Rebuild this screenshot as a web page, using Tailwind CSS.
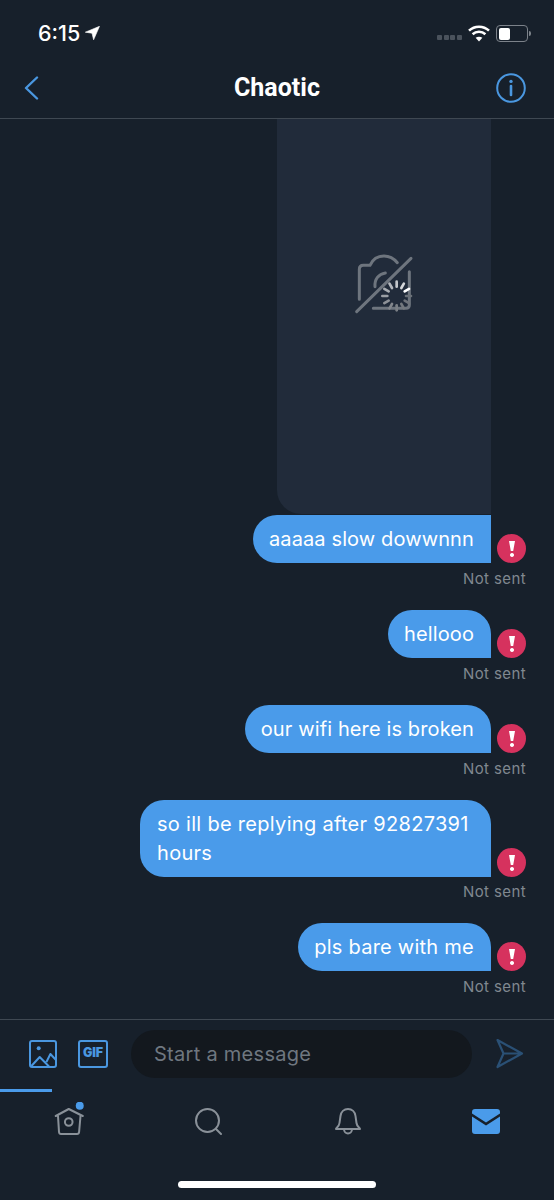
<!DOCTYPE html>
<html lang="en">
<head>
    <meta charset="UTF-8">
    <meta name="viewport" content="width=device-width, initial-scale=1.0">
    <title>Chaotic</title>
    <script src="https://cdn.jsdelivr.net/npm/@tailwindcss/browser@4"></script>
</head>
<body class="bg-[#17202b] font-['Inter',sans-serif] text-white">
    <div class="w-[554px] h-[1200px] overflow-hidden flex flex-col relative">

        <!-- Status bar -->
        <div class="h-[66px] flex items-start justify-between pt-[20px] pl-[38px] pr-[23px]">
            <div class="flex items-center gap-[5px]">
                <span class="text-[21.5px] leading-[26px] font-medium">6:15</span>
                <svg class="w-[15px] h-[14px]" viewBox="0 0 15 14"><path d="M14.5 .3 L.3 6.2 L7 7.2 L8.6 13.8 Z" fill="#fff" stroke="#fff" stroke-width=".6" stroke-linejoin="round"/></svg>
            </div>
            <div class="flex items-start">
                <div class="flex gap-[1.6px] mt-[15px] mr-[6px]">
                    <span class="w-[5px] h-[5px] rounded-[1px] bg-[#4a525c]"></span>
                    <span class="w-[5px] h-[5px] rounded-[1px] bg-[#4a525c]"></span>
                    <span class="w-[5px] h-[5px] rounded-[1px] bg-[#4a525c]"></span>
                    <span class="w-[5px] h-[5px] rounded-[1px] bg-[#4a525c]"></span>
                </div>
                <svg class="w-[22px] h-[17px] mt-[5px] mr-[6px]" viewBox="0 0 22 17" fill="none" stroke="#fff" stroke-width="2.6">
                    <path d="M1 5.6 C6.6 .4 15.4 .4 21 5.6"/>
                    <path d="M4.6 9.2 C8.2 6 13.8 6 17.4 9.2"/>
                    <path d="M11 16.6 L7.6 12.8 C9.6 11.3 12.4 11.3 14.4 12.8 Z" fill="#fff" stroke="none"/>
                </svg>
                <div class="flex items-center gap-[1px] mt-[5px]">
                    <div class="w-[32px] h-[17px] rounded-[4px] border border-[#7c828a] p-[1.5px]">
                        <div class="w-[11px] h-full rounded-[2px] bg-white"></div>
                    </div>
                    <span class="w-[2px] h-[5px] rounded-r bg-[#7c828a]"></span>
                </div>
            </div>
        </div>

        <!-- Nav -->
        <header class="h-[53px] grid grid-cols-[1fr_auto_1fr] items-center pl-[23px] pr-[28px] pb-[8px] border-b border-[#3f4852]">
            <svg class="w-[16px] h-[24px]" viewBox="0 0 16 24" fill="none" stroke="#4a97e0" stroke-width="2.4" stroke-linecap="round" stroke-linejoin="round"><path d="M14 1.5 L3 12 L14 22.5"/></svg>
            <h1 class="text-[25px] leading-[30px] font-bold font-['Roboto',sans-serif] ml-[5px]">Chaotic</h1>
            <svg class="w-[30px] h-[30px] justify-self-end" viewBox="0 0 30 30" fill="none" stroke="#4a97e0" stroke-width="2">
                <circle cx="15" cy="15" r="13.8"/>
                <path d="M15 13 V22" stroke-width="2.6" stroke-linecap="round"/>
                <circle cx="15" cy="8.4" r="1.7" fill="#4a97e0" stroke="none"/>
            </svg>
        </header>

        <!-- Messages -->
        <main class="h-[900px] flex flex-col items-end justify-end overflow-hidden pr-[28px]">
            <div class="w-[214px] h-[458px] shrink-0 mr-[35px] bg-[#212b3a] rounded-bl-[24px] flex items-center justify-center">
                <svg class="w-[100px] h-[90px] mr-[8px]" viewBox="0 0 300 270" fill="none" stroke="#6e757e" stroke-width="9" stroke-linecap="round" stroke-linejoin="round">
                    <path d="M88 178 V88 Q88 76 100 76 H120 C128 58 144 48 162 48 C178 48 192 56 202 68"/>
                    <path d="M135 140 C133 118 146 102 166 99"/>
                    <path d="M80 215 L243 55"/>
                    <path d="M130 205 H228 Q238 205 238 195 V95"/>
                    <g stroke-width="8">
                        <path d="M214 144 L221.500 131" stroke="#d5d7da"/>
                        <path d="M224 154 L237 146.500" stroke="#ffffff"/>
                        <path d="M228 168 L243 168" stroke="#6a7077"/>
                        <path d="M224 182 L237 189.500" stroke="#6e737a"/>
                        <path d="M214 192 L221.500 205" stroke="#73787e"/>
                        <path d="M200 196 L200 211" stroke="#7a7f85"/>
                        <path d="M186 192 L178.500 205" stroke="#82868c"/>
                        <path d="M176 182 L163 189.500" stroke="#8d9197"/>
                        <path d="M172 168 L157 168" stroke="#9a9ea4"/>
                        <path d="M176 154 L163 146.500" stroke="#a8acb1"/>
                        <path d="M186 144 L178.500 131" stroke="#b5b8bd"/>
                        <path d="M200 140 L200 125" stroke="#c4c7cb"/>
                    </g>
                </svg>
            </div>

            <div class="flex flex-col items-end h-[95px] shrink-0 mt-[1px]">
                <div class="flex items-end gap-[6px]">
                    <div class="h-[48px] flex items-center pl-[16px] pr-[17px] bg-[#4a9bea] rounded-l-[24px] text-[20px] leading-[26px] tracking-[0.12px]">aaaaa slow dowwnnn</div>
                    <div class="w-[29px] h-[29px] rounded-full bg-[#d6325e] flex items-center justify-center">
                        <svg class="w-[10px] h-[17px]" viewBox="0 0 10 17"><path d="M2 1 H8 L6.2 11 H3.8 Z M5 13 a2 2 0 1 0 .01 0 Z" fill="#fff"/></svg>
                    </div>
                </div>
                <span class="mt-[6px] text-[15px] leading-[20px] tracking-[0.4px] text-[#808890]">Not sent</span>
            </div>

            <div class="flex flex-col items-end h-[95px] shrink-0">
                <div class="flex items-end gap-[6px]">
                    <div class="h-[48px] flex items-center pl-[16px] pr-[17px] bg-[#4a9bea] rounded-l-[24px] rounded-tr-[24px] text-[20px] leading-[26px] tracking-[0.12px]">hellooo</div>
                    <div class="w-[29px] h-[29px] rounded-full bg-[#d6325e] flex items-center justify-center">
                        <svg class="w-[10px] h-[17px]" viewBox="0 0 10 17"><path d="M2 1 H8 L6.2 11 H3.8 Z M5 13 a2 2 0 1 0 .01 0 Z" fill="#fff"/></svg>
                    </div>
                </div>
                <span class="mt-[6px] text-[15px] leading-[20px] tracking-[0.4px] text-[#808890]">Not sent</span>
            </div>

            <div class="flex flex-col items-end h-[95px] shrink-0">
                <div class="flex items-end gap-[6px]">
                    <div class="h-[48px] flex items-center pl-[16px] pr-[17px] bg-[#4a9bea] rounded-l-[24px] rounded-tr-[24px] text-[20px] leading-[26px] tracking-[0.12px]">our wifi here is broken</div>
                    <div class="w-[29px] h-[29px] rounded-full bg-[#d6325e] flex items-center justify-center">
                        <svg class="w-[10px] h-[17px]" viewBox="0 0 10 17"><path d="M2 1 H8 L6.2 11 H3.8 Z M5 13 a2 2 0 1 0 .01 0 Z" fill="#fff"/></svg>
                    </div>
                </div>
                <span class="mt-[6px] text-[15px] leading-[20px] tracking-[0.4px] text-[#808890]">Not sent</span>
            </div>

            <div class="flex flex-col items-end h-[123px] shrink-0">
                <div class="flex items-end gap-[6px]">
                    <div class="w-[351px] h-[77px] flex items-center pl-[17px] pr-[17px] bg-[#4a9bea] rounded-l-[24px] rounded-tr-[24px] text-[20px] leading-[29px] tracking-[0.3px]">so ill be replying after 92827391 hours</div>
                    <div class="w-[29px] h-[29px] rounded-full bg-[#d6325e] flex items-center justify-center">
                        <svg class="w-[10px] h-[17px]" viewBox="0 0 10 17"><path d="M2 1 H8 L6.2 11 H3.8 Z M5 13 a2 2 0 1 0 .01 0 Z" fill="#fff"/></svg>
                    </div>
                </div>
                <span class="mt-[5px] text-[15px] leading-[20px] tracking-[0.4px] text-[#808890]">Not sent</span>
            </div>

            <div class="flex flex-col items-end h-[96px] shrink-0">
                <div class="flex items-end gap-[6px]">
                    <div class="h-[48px] flex items-center pl-[16px] pr-[17px] bg-[#4a9bea] rounded-l-[24px] rounded-tr-[24px] text-[20px] leading-[26px] tracking-[0.25px]">pls bare with me</div>
                    <div class="w-[29px] h-[29px] rounded-full bg-[#d6325e] flex items-center justify-center">
                        <svg class="w-[10px] h-[17px]" viewBox="0 0 10 17"><path d="M2 1 H8 L6.2 11 H3.8 Z M5 13 a2 2 0 1 0 .01 0 Z" fill="#fff"/></svg>
                    </div>
                </div>
                <span class="mt-[6px] text-[15px] leading-[20px] tracking-[0.4px] text-[#808890]">Not sent</span>
            </div>
        </main>

        <!-- Composer -->
        <div class="h-[70px] shrink-0 border-t border-[#3f4852] flex items-center pl-[29px] pr-[30px] pb-[2px]">
            <svg class="w-[28px] h-[28px] shrink-0" viewBox="0 0 28 28" fill="none" stroke="#4a97e0" stroke-width="2" stroke-linejoin="round">
                <rect x="1" y="1" width="26" height="26" rx="2"/>
                <circle cx="9.700" cy="8.300" r="2" fill="#4a97e0" stroke="none"/>
                <path d="M2.400 26 L10.700 17 L20 26.500 M17.400 22 L21.400 14 L27 20"/>
            </svg>
            <div class="w-[30px] h-[28px] ml-[21px] shrink-0 rounded-[3px] border-2 border-[#4a97e0] flex items-center justify-center text-[12.5px] font-black tracking-[-0.2px] text-[#4a97e0]">GIF</div>
            <div class="w-[341px] h-[48px] ml-[23px] shrink-0 rounded-[24px] bg-[#13181e] flex items-center pl-[23px] text-[20px] tracking-[0.28px] text-[#6f7780]">Start a message</div>
            <svg class="w-[28px] h-[31px] ml-[24px] shrink-0" viewBox="0 0 28 31" fill="none" stroke="#2a5075" stroke-width="2.2" stroke-linejoin="round">
                <path d="M1.500 2 L26 15.500 L1.500 29 L7.500 15.500 Z M7.500 15.500 H26"/>
            </svg>
        </div>

        <!-- Tab bar -->
        <nav class="relative h-[111px] shrink-0">
            <div class="h-[3px] w-[52px] bg-[#4a9bea]"></div>
            <div class="grid grid-cols-4 pt-[13px]">
                <div class="flex justify-center">
                    <svg class="w-[30px] h-[36px] -mt-[3px]" viewBox="0 0 30 36" fill="none" stroke="#8a9199" stroke-width="2" stroke-linejoin="round" stroke-linecap="round">
                        <path d="M1.750 14 L14.750 7 L28.750 14"/>
                        <path d="M4 14 L5 30 C5.100 31 6 32 7 32 H23 C24 32 25 31 25.100 30 L26.500 14"/>
                        <circle cx="14.750" cy="20" r="3.800"/>
                        <circle cx="25.750" cy="3.700" r="4" fill="#4a9bea" stroke="none"/>
                    </svg>
                </div>
                <div class="flex justify-center">
                    <svg class="w-[28px] h-[28px] mt-[3px]" viewBox="0 0 28 28" fill="none" stroke="#8a9199" stroke-width="2" stroke-linecap="round">
                        <circle cx="13.500" cy="12.500" r="11.500"/>
                        <path d="M22 21 L27 26"/>
                    </svg>
                </div>
                <div class="flex justify-center">
                    <svg class="w-[28px] h-[28px] mt-[3px] ml-[3px]" viewBox="0 0 28 28" fill="none" stroke="#8a9199" stroke-width="2" stroke-linejoin="round">
                        <path d="M2 21 C2 20 5 19 5.500 15 L6.500 8 C7 4 10 1 14 1 C18 1 21 4 21.500 8 L22.500 15 C23 19 26 20 26 21 Z"/>
                        <path d="M10 21 C10 27 18 27 18 21"/>
                    </svg>
                </div>
                <div class="flex justify-center">
                    <svg class="w-[28px] h-[25px] mt-[4px] ml-[2px]" viewBox="0 0 28 25"><path d="M3 0 H25 C27 0 28 1 28 3 V4.500 L14 13.500 L0 4.500 V3 C0 1 1 0 3 0 Z M0 7.500 L14 16.500 L28 7.500 V22 C28 24 27 25 25 25 H3 C1 25 0 24 0 22 Z" fill="#4a9bea"/></svg>
                </div>
            </div>
            <div class="absolute left-[178px] top-[92px] w-[198px] h-[7px] rounded-full bg-white"></div>
        </nav>
    </div>
</body>
</html>
